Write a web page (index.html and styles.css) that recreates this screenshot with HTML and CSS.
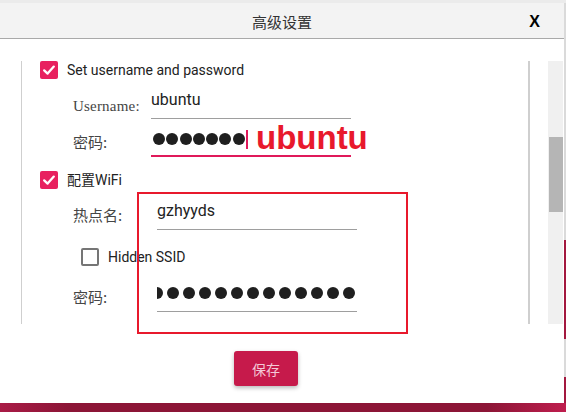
FILE: index.html
```html
<!DOCTYPE html>
<html lang="zh-CN">
<head>
<meta charset="utf-8">
<title>高级设置</title>
<link rel="stylesheet" href="styles.css">
</head>
<body>
<div class="screen">
  <div class="topstrip"></div>
  <div class="main">
    <section class="dialog">
      <header class="titlebar">
        <span class="spacer"></span>
        <h1 class="title">高级设置</h1>
        <span class="close">X</span>
      </header>
      <div class="scrollwrap">
        <div class="scrollarea">
          <div class="check-row row-a">
            <span class="cb checked"><svg viewBox="0 0 18 18" width="18" height="18"><path d="M4.2 9.4 L7.6 12.6 L13.8 5.6" fill="none" stroke="#fff" stroke-width="2.3" stroke-linecap="round" stroke-linejoin="round"/></svg></span>
            <span class="cb-label">Set username and password</span>
          </div>
          <div class="field user row-b">
            <span class="label latin">Username:</span>
            <div class="input">ubuntu</div>
          </div>
          <div class="field user row-c">
            <span class="label cjk">密码:</span>
            <div class="input focused">
              <span class="dots small"><i></i><i></i><i></i><i></i><i></i><i></i><i></i></span><span class="caret"></span>
            </div>
          </div>
          <div class="check-row row-d">
            <span class="cb checked"><svg viewBox="0 0 18 18" width="18" height="18"><path d="M4.2 9.4 L7.6 12.6 L13.8 5.6" fill="none" stroke="#fff" stroke-width="2.3" stroke-linecap="round" stroke-linejoin="round"/></svg></span>
            <span class="cb-label">配置WiFi</span>
          </div>
          <div class="field wifi row-e">
            <span class="label cjk">热点名:</span>
            <div class="input">gzhyyds</div>
          </div>
          <div class="check-row sub row-f">
            <span class="cb"></span>
            <span class="cb-label">Hidden SSID</span>
          </div>
          <div class="field wifi row-g">
            <span class="label cjk">密码:</span>
            <div class="input clip">
              <span class="dots big"><i></i><i></i><i></i><i></i><i></i><i></i><i></i><i></i><i></i><i></i><i></i><i></i><i></i></span>
            </div>
          </div>
        </div>
        <div class="scrollbar"><div class="thumb"></div></div>
      </div>
      <div class="actions"><button class="save">保存</button></div>
    </section>
    <div class="edge"></div>
  </div>
  <div class="bottombar"></div>
  <div class="anno-box"></div>
  <div class="anno-text">ubuntu</div>
</div>
</body>
</html>
```

FILE: styles.css
```css
* { box-sizing: border-box; }
html, body { margin: 0; padding: 0; }
body {
  width: 566px;
  height: 412px;
  overflow: hidden;
  background: #8e1537;
  font-family: Roboto, "Noto Sans CJK SC", sans-serif;
}
.screen { position: relative; width: 566px; height: 412px; }
.topstrip { height: 3px; background: #ebebeb; }
.main { display: flex; height: 400px; }
.dialog {
  width: 564px;
  background: #fff;
  display: flex;
  flex-direction: column;
}
.edge {
  width: 2px;
  background: linear-gradient(to bottom,
    #dadada 0, #dadada 237px,
    #a3183f 237px, #a3183f 336px,
    #dadada 336px, #dadada 374px,
    #a3183f 374px, #a3183f 100%);
}
.bottombar {
  height: 9px;
  background: linear-gradient(90deg, #a91b46 0, #8c1536 12%, #8c1536 86%, #bf1e4e 100%);
}

/* title bar */
.titlebar {
  height: 36px;
  border-bottom: 1px solid #a9a9a9;
  background: #f3f3f3;
  display: grid;
  grid-template-columns: 1fr auto 1fr;
  align-items: center;
  padding-top: 3px;
}
.title {
  margin: 0;
  font: 400 15px/20px "Noto Sans CJK SC", sans-serif;
  color: #333;
}
.close {
  justify-self: end;
  margin-right: 24px;
  font: 700 16px/20px "Liberation Sans", Arial, sans-serif;
  color: #000;
}

/* scroll region */
.scrollwrap {
  display: flex;
  margin-top: 22px;
  padding-left: 21px;
}
.scrollarea {
  width: 509px;
  height: 263px;
  overflow: hidden;
  border-left: 1px solid #cfcfcf;
  border-right: 2px solid #cfcfcf;
  padding-left: 18px;
}
.scrollbar {
  margin-left: 18px;
  width: 15px;
  height: 263px;
  background: #f0f0f0;
  padding-top: 76px;
}
.thumb {
  margin-left: 1px;
  width: 14px;
  height: 75px;
  background: #b5b5b5;
}

/* rows */
.check-row {
  display: flex;
  align-items: center;
  height: 18px;
}
.check-row.sub { padding-left: 41px; }
.cb {
  width: 18px;
  height: 18px;
  border-radius: 2px;
  border: 2px solid #757575;
  background: #fff;
  flex: none;
}
.cb.checked {
  border: none;
  background: #e8215f;
}
.cb svg { display: block; }
.cb-label {
  margin-left: 9px;
  font-size: 14px;
  line-height: 18px;
  color: #222;
}

.field {
  display: flex;
  align-items: flex-end;
  padding-left: 33px;
}
.label { color: #454545; }
.label.latin {
  font: 15px/20px "Liberation Serif", serif;
  letter-spacing: 0.2px;
  padding-bottom: 3px;
}
.label.cjk {
  font: 15px/20px "Noto Sans CJK SC", sans-serif;
  padding-bottom: 5px;
}
.user .label { width: 78px; }
.wifi .label { width: 84px; }
.input {
  width: 200px;
  font-size: 16px;
  line-height: 20px;
  color: #222;
  padding-bottom: 8px;
  border-bottom: 1px solid #9e9e9e;
}
.input.focused {
  display: flex;
  align-items: center;
  height: 28px;
  padding-bottom: 6px;
  border-bottom: 2px solid #e0195a;
}
.input.clip {
  display: flex;
  align-items: center;
  height: 29px;
  overflow: hidden;
}
.dots { display: flex; align-items: center; }
.dots i {
  display: block;
  width: 12px;
  height: 12px;
  border-radius: 50%;
  background: #1f1f1f;
}
.dots.small { padding-left: 2px; gap: 1.3px; }
.dots.big { margin-left: -6px; gap: 4px; }
.caret {
  width: 2px;
  height: 19px;
  margin-left: 1px;
  background: #e0195a;
}

.row-b { margin-top: 11px; }
.row-c { margin-top: 10px; }
.row-d { margin-top: 14px; }
.row-e { margin-top: 12px; }
.row-f { margin-top: 18px; }
.row-g { margin-top: 17px; }

/* actions */
.actions {
  display: flex;
  justify-content: center;
  margin-top: 27px;
  padding-right: 32px;
}
.save {
  width: 64px;
  height: 35px;
  border: none;
  border-radius: 3px;
  background: #c61a4b;
  color: #f4c9d7;
  font: 14px/20px "Noto Sans CJK SC", sans-serif;
  box-shadow: 0 2px 4px rgba(0, 0, 0, 0.28);
  padding: 0;
}

/* red annotations drawn over the screenshot */
.anno-box {
  position: absolute;
  left: 137px;
  top: 192px;
  width: 271px;
  height: 142px;
  border: 2px solid #e8192c;
}
.anno-text {
  position: absolute;
  left: 256px;
  top: 121px;
  font: 700 33px/33px "Liberation Sans", Arial, sans-serif;
  color: #e8192c;
}
```
